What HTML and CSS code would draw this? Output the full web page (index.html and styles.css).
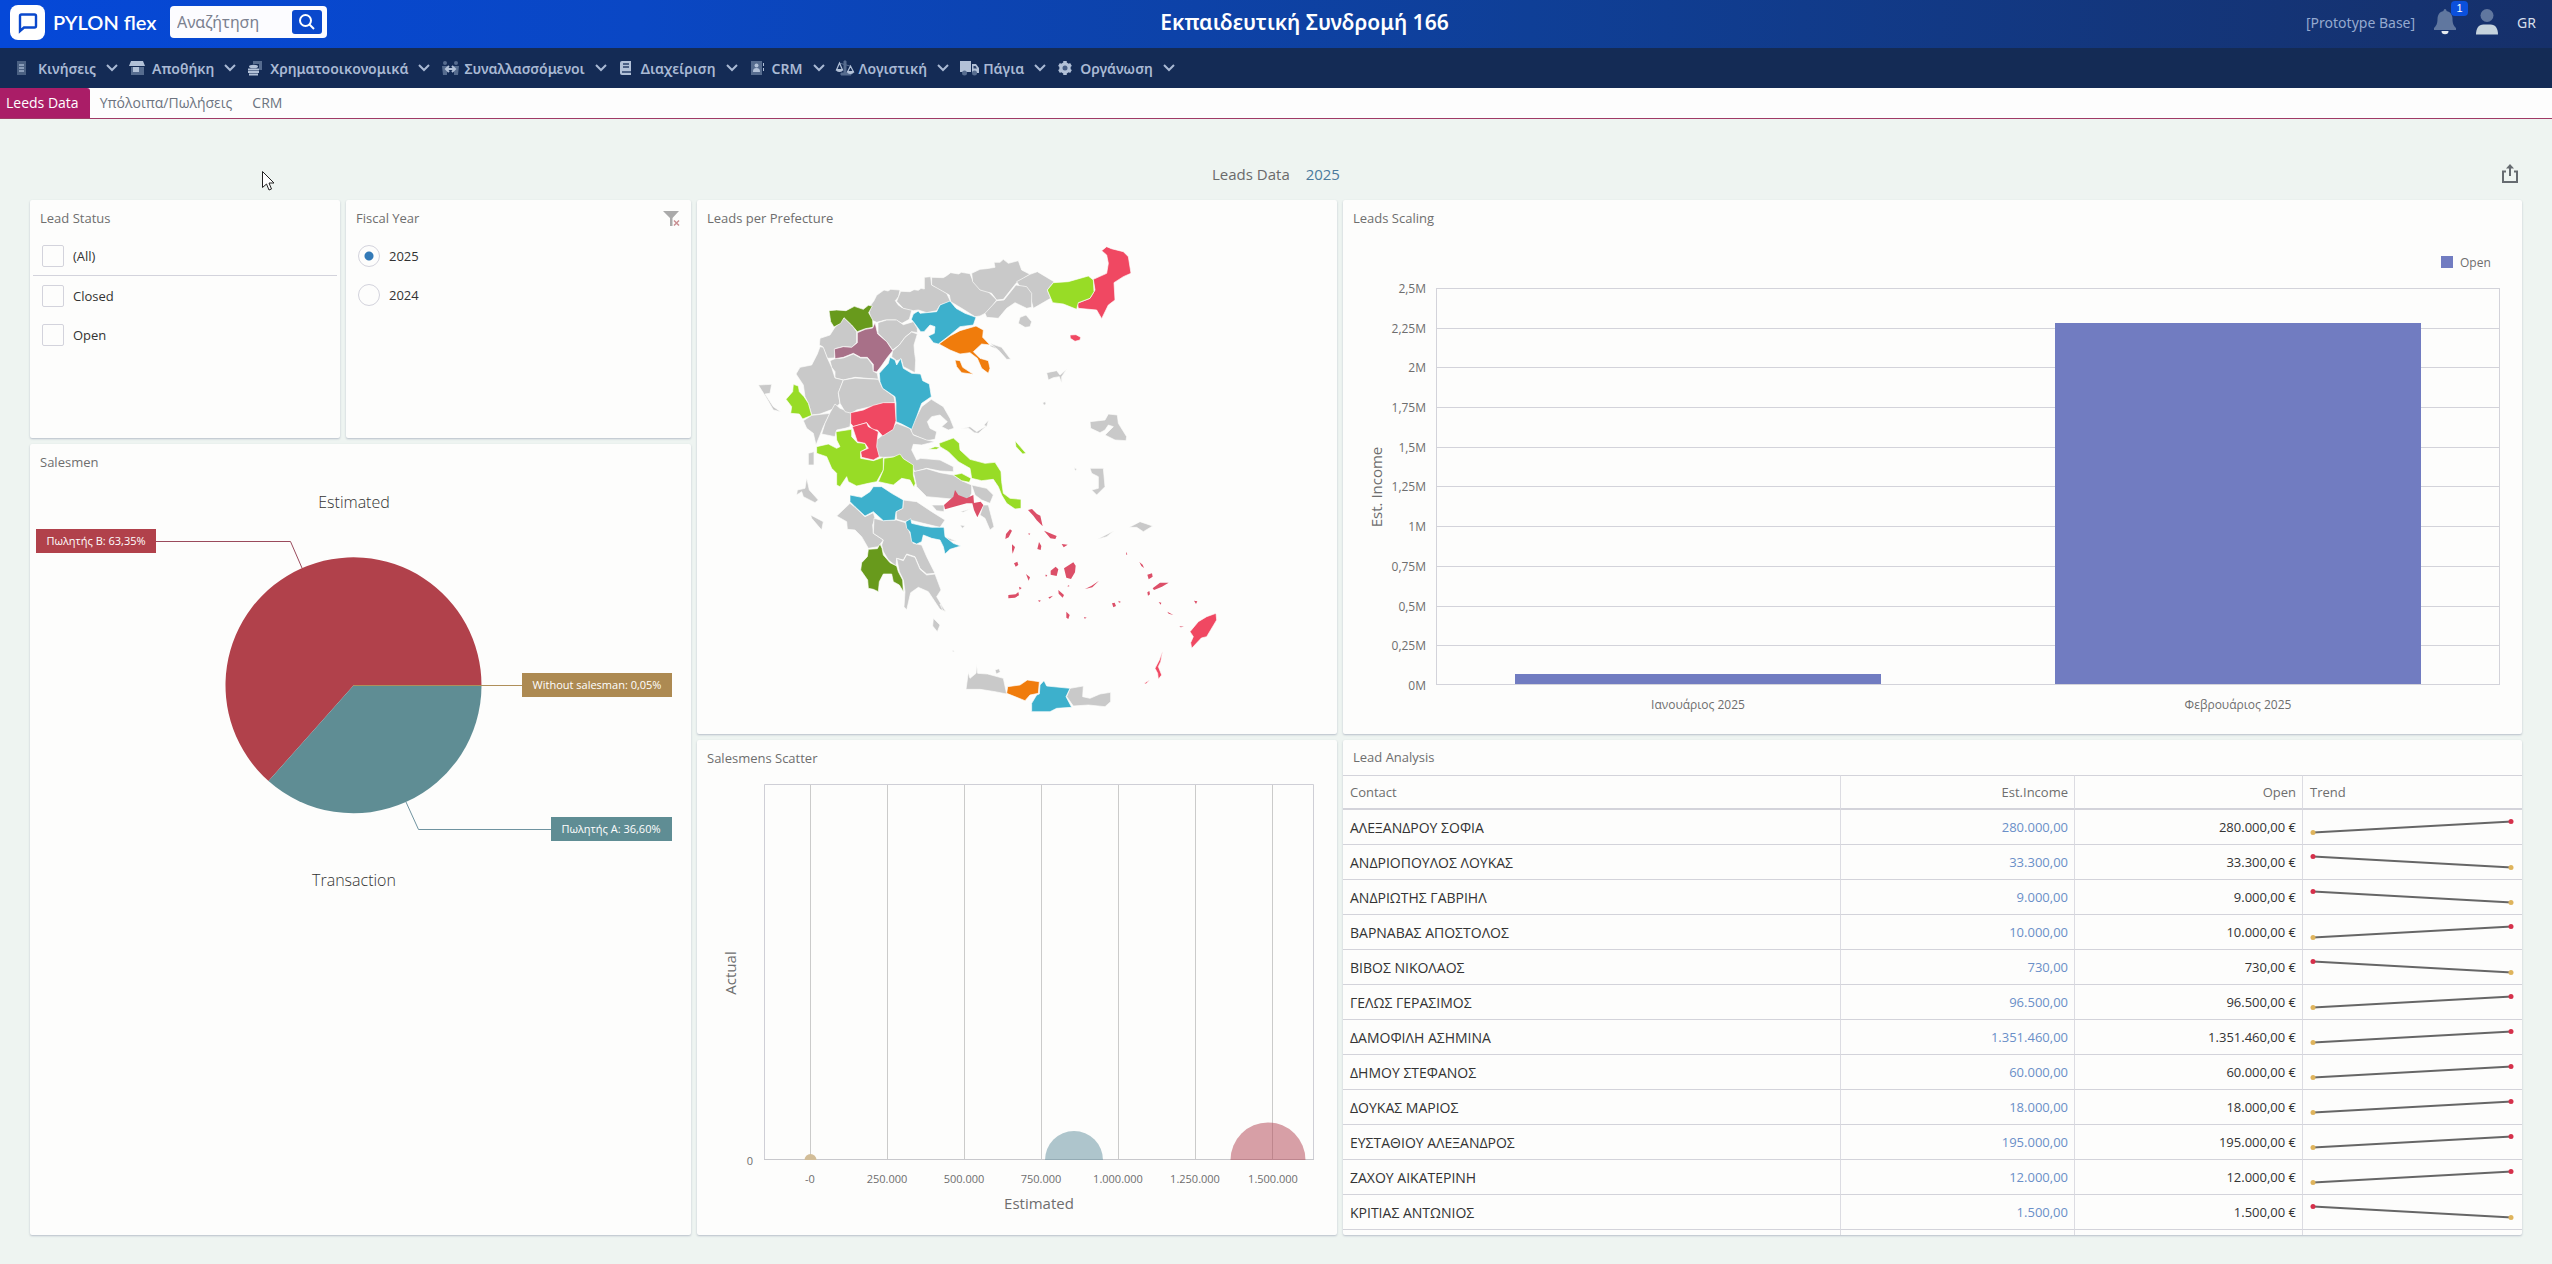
FILE: index.html
```html
<!DOCTYPE html>
<html lang="el">
<head>
  <meta charset="utf-8">
  <title>PYLON flex</title>
  <link rel="stylesheet" href="styles.css">
</head>
<body>
  <svg class="defs" width="0" height="0" aria-hidden="true">
    <symbol id="chev" viewBox="0 0 12 8"><path d="M1 1l5 5 5-5" fill="none" stroke="currentColor" stroke-width="2"/></symbol>
    <symbol id="up" viewBox="0 0 204 16">
      <path d="M3 13.500L202 2.500" stroke="#666" stroke-width="2"/>
      <circle cx="3" cy="13.500" r="2.500" fill="#dfb45c"/><circle cx="201" cy="2.500" r="2.500" fill="#d6304a"/>
    </symbol>
    <symbol id="down" viewBox="0 0 204 16">
      <path d="M3 2.500L202 13.500" stroke="#666" stroke-width="2"/>
      <circle cx="3" cy="2.500" r="2.500" fill="#d6304a"/><circle cx="201" cy="13.500" r="2.500" fill="#dfb45c"/>
    </symbol>
  </svg>

  <header class="topbar">
    <div class="brand">
      <svg width="35" height="35" viewBox="0 0 35 35">
        <rect width="35" height="35" rx="8" fill="#fff"/>
        <path d="M10 26V11a1.500 1.500 0 0 1 1.500-1.500h13A1.500 1.500 0 0 1 26 11v10a1.500 1.500 0 0 1-1.500 1.500H14z" fill="none" stroke="#0a48cc" stroke-width="2.400"/>
      </svg>
      <span class="brand-name">PYLON flex</span>
    </div>
    <form class="search">
      <input type="text" placeholder="Αναζήτηση" aria-label="Αναζήτηση">
      <button type="button" aria-label="Αναζήτηση">
        <svg width="18" height="18" viewBox="0 0 18 18"><circle cx="7.500" cy="7.500" r="5.500" fill="none" stroke="#fff" stroke-width="2"/><path d="M11.500 11.500L16 16" stroke="#fff" stroke-width="2"/></svg>
      </button>
    </form>
    <h1 class="company">Εκπαιδευτική Συνδρομή 166</h1>
    <div class="user-tools">
      <span class="base">[Prototype Base]</span>
      <button class="icon-btn bell" type="button" aria-label="1">
        <svg width="24" height="26" viewBox="0 0 24 26"><path d="M12 0c1 0 1.500 1 1.500 2 4 .8 6 4 6 8 0 5 1.500 7 3.500 9v2H1v-2c2-2 3.500-4 3.500-9 0-4 2-7.200 6-8 0-1 .5-2 1.500-2z" fill="#60779f"/><path d="M8.500 22h7a3.500 3.200 0 0 1-7 0z" fill="#e4e9ee"/></svg>
        <span class="badge">1</span>
      </button>
      <button class="icon-btn" type="button" aria-label="User">
        <svg width="24" height="26" viewBox="0 0 24 26"><circle cx="12" cy="6.500" r="6.500" fill="#60779f"/><path d="M1 25.500c0-6 2.500-10 7.500-10h7c5 0 7.500 4 7.500 10z" fill="#c5d3dd"/></svg>
      </button>
      <span class="lang">GR</span>
    </div>
  </header>

  <nav class="menu">
    <a href="#"><svg class="ico" viewBox="0 0 20 16"><path d="M3 1h9v14H3z" fill="#4a6082"/><path d="M5 5h5M5 8h5M5 11h5" stroke="#9fb0cc" stroke-width="1.500"/></svg>Κινήσεις<svg class="chev"><use href="#chev"/></svg></a>
    <a href="#"><svg class="ico" viewBox="0 0 20 16"><path d="M3 1h12l2 5H1z" fill="#b2c1d8"/><path d="M3 7h13v8H3z" fill="#566c8f"/><path d="M5 7h6v5H5z" fill="#b2c1d8"/></svg>Αποθήκη<svg class="chev"><use href="#chev"/></svg></a>
    <a href="#"><svg class="ico" viewBox="0 0 20 16"><path d="M7 1h9v9h-3V4H7z" fill="#566c8f"/><ellipse cx="7.500" cy="6.500" rx="4.500" ry="1.800" fill="#b2c1d8"/><path d="M2 9.500h11M2 12h11M3 14.500h9" stroke="#b2c1d8" stroke-width="1.800"/></svg>Χρηματοοικονομικά<svg class="chev"><use href="#chev"/></svg></a>
    <a href="#"><svg class="ico" viewBox="0 0 20 16"><circle cx="5" cy="3" r="2" fill="#566c8f"/><circle cx="16" cy="3" r="2" fill="#566c8f"/><path d="M2 6h5v9H3zM14 6h5l-1 9h-4z" fill="#566c8f"/><path d="M6 9h9M9 6L6 9l3 3M12 6l3 3-3 3" fill="none" stroke="#b2c1d8" stroke-width="2"/></svg>Συναλλασσόμενοι<svg class="chev"><use href="#chev"/></svg></a>
    <a href="#"><svg class="ico" viewBox="0 0 20 16"><path d="M5 1h9v14H5a2 2 0 0 1-2-2V3a2 2 0 0 1 2-2z" fill="#b2c1d8"/><path d="M6 4h6M6 7h6M5 12h9" stroke="#2a4069" stroke-width="1.500"/></svg>Διαχείριση<svg class="chev"><use href="#chev"/></svg></a>
    <a href="#"><svg class="ico" viewBox="0 0 20 16"><path d="M3 1h11v14H3z" fill="#566c8f"/><circle cx="8.500" cy="5.500" r="2" fill="#b2c1d8"/><path d="M5 12c0-3 1-4 3.500-4s3.500 1 3.500 4zM15 3h1v3h-1zM15 8h1v3h-1z" fill="#b2c1d8"/></svg>CRM<svg class="chev"><use href="#chev"/></svg></a>
    <a href="#"><svg class="ico" viewBox="0 0 20 16"><path d="M9 1h2v12h5v2H6v-2h3zM4 3l11 3" fill="#566c8f" stroke="#566c8f"/><path d="M4.500 3L1.500 10h6zM15.500 6l-3 6h6z" fill="none" stroke="#b2c1d8" stroke-width="1.200"/><path d="M1 9h7a3.500 3 0 0 1-7 0zM12 11h7a3.500 3 0 0 1-7 0z" fill="#b2c1d8"/></svg>Λογιστική<svg class="chev"><use href="#chev"/></svg></a>
    <a href="#"><svg class="ico" viewBox="0 0 20 16"><path d="M1 1h11v11H1zM13 4h4l3 4v5h-7z" fill="#b2c1d8"/><path d="M14.500 6h2l1.500 2.500h-3.500z" fill="#2a4069"/><circle cx="5.500" cy="13" r="2.500" fill="#566c8f"/><circle cx="15.500" cy="13" r="2.500" fill="#566c8f"/></svg>Πάγια<svg class="chev"><use href="#chev"/></svg></a>
    <a href="#"><svg class="ico" viewBox="0 0 20 16"><circle cx="9" cy="8" r="4" fill="none" stroke="#b2c1d8" stroke-width="3.500"/><path d="M9 1v14M3 4.500l12 7M3 11.500l12-7" stroke="#b2c1d8" stroke-width="3.500"/><circle cx="9" cy="8" r="2.500" fill="#465d85"/></svg>Οργάνωση<svg class="chev"><use href="#chev"/></svg></a>
  </nav>

  <div class="tabs">
    <a class="tab active" href="#">Leeds Data</a>
    <a class="tab" href="#">Υπόλοιπα/Πωλήσεις</a>
    <a class="tab" href="#">CRM</a>
  </div>

  <main class="page">
    <div class="dash-title">
      <h2>Leads Data <span>2025</span></h2>
      <button class="icon-btn share" type="button" aria-label="Export">
        <svg width="18" height="20" viewBox="0 0 18 20"><path d="M5 7.500H2v10.500h14V7.500h-3M9 12V3" fill="none" stroke="#666b70" stroke-width="2"/><path d="M9 0l4 4.500H5z" fill="#666b70"/></svg>
      </button>
    </div>

    <div class="dashboard">
      <div class="col col-left">
        <div class="filters">
          <section class="panel status">
            <h3>Lead Status</h3>
            <label class="opt all"><input type="checkbox">(All)</label>
            <label class="opt"><input type="checkbox">Closed</label>
            <label class="opt"><input type="checkbox">Open</label>
          </section>
          <section class="panel year">
            <div class="panel-head">
              <h3>Fiscal Year</h3>
              <button class="icon-btn" type="button" aria-label="Clear filter">
                <svg width="17" height="17" viewBox="0 0 17 17"><path d="M0 1h16l-6.500 7v8H7V8z" fill="#aaa"/><path d="M11 10.500l5 5M16 10.500l-5 5" stroke="#c98f92" stroke-width="1.500"/></svg>
              </button>
            </div>
            <label class="opt"><input type="radio" name="year" checked>2025</label>
            <label class="opt"><input type="radio" name="year">2024</label>
          </section>
        </div>
        <section class="panel salesmen">
          <h3>Salesmen</h3>
          <svg class="chart" viewBox="30 480 661 755">
            <text class="pie-title" x="354" y="508">Estimated</text>
            <path d="M353.500 685.500H481.500A128 128 0 1 0 268.500 781z" fill="#b1414b"/>
            <path d="M353.500 685.500L268.500 781A128 128 0 0 0 481.500 685.500z" fill="#5f8d94"/>
            <path d="M353.500 685.500H522" stroke="#af8f5a"/>
            <path d="M156 541.500H290.500L302 568" fill="none" stroke="#9a4a5c"/>
            <path d="M406 802L418.500 829.500H551" fill="none" stroke="#6f93a0"/>
            <rect x="36" y="529" width="120" height="24" fill="#b1414b"/>
            <rect x="522" y="673" width="150" height="24" fill="#ad8a52"/>
            <rect x="551" y="817" width="121" height="24" fill="#5f8d94"/>
            <text class="pie-label" x="96" y="545">Πωλητής Β: 63,35%</text>
            <text class="pie-label" x="597" y="689">Without salesman: 0,05%</text>
            <text class="pie-label" x="611" y="833">Πωλητής Α: 36,60%</text>
            <text class="pie-title" x="354" y="886">Transaction</text>
          </svg>
        </section>
      </div>

      <div class="col col-mid">
        <section class="panel prefectures">
          <h3>Leads per Prefecture</h3>
          <svg class="chart map" viewBox="-129 18 1920 1494">
            <!-- north and central mainland -->
            <g class="land">
              <path d="M388 248l4-22 10-14 8-16 22-16 12 3 8-5 28 2-4 20-10 12 8 12 12 9 30 5-8 30-22 12-20-10h-30l-26 7-16-7z"/>
              <path d="M414 278l26-8h30l20 14 30-9 12 20v13l-17-3-20 17-17 23-20 15-18-25-26-25z"/>
              <path d="M458 362l20-17 17-23 20-16 17 6-10 33 2 25 3 20-2 38-35-18-6-22-14 4-15-12z"/>
              <path d="M482 184l28 1 12-6 13 2 8-6 10 2v-35l19-2 3 25 23 10 22 15 12 25-32 10-10 17-30 6-25-8-15 2-30-7-20-21z"/>
              <path d="M575 142l35 1 10-6 12-9 24 4 8-5 26 4 10 24 45 30 25 25-25 35-25 13-15 2-35-22-38-23-4-20-53-30z"/>
              <path d="M240 325l30-10 14-22 28-29 23 21 15 20v33l-15 14-25-2-25 6-2 28-21 1-14-35-10-5z"/>
              <path d="M270 392l15-6 25-2 30-12 22 12h20l16 21 2 19 12 6 3 18-70-6-35 8-25-6v-19l-10-13z"/>
              <path d="M240 350l10 2 12 32 13 28 10 32 25 6-15 40 5 30-15 15-45 17-25 3-10-35-10-20-5-35-22-33 12-20 35-7 17-33z"/>
              <path d="M190 572l25-16 55-6-20 40-12 30-10 25-8-35-20-15z"/>
              <path d="M285 522l15 13 35 13-5 42-15 5-25 5-5 20-40-8 10-32 15-32z"/>
              <path d="M295 488l15-38 35-6 70 4 13 27 34 25 3 18-35 2-30 8-50 12-15 10-20-5-15-25z"/>
              <path d="M574 508l36 22 20 35 12 30-17 5-20-10 17-15-22-20-25 5-13 15 8 20 20 10-5 23-25 4-45-20-3-20 18-32 15-30z"/>
              <path d="M410 630l30-25 30-25 40 15 10 20 40 15 25 5-40 10-25-2-5 17 15 30 12-5 58 5 40 20v15l-40-2-40-8-35 10-15-25-30-20-50 2-15-2-8-30z"/>
              <path d="M520 725l40-9 40 12 40 7 25 17 30 13v25l-10 20-30-6-20 3-75-7-30-30z"/>
              <path d="M55 465l40-2-5 27-15 2 25 38 22 15-22-5-20-35zM750 345l35 8-10 6-25-10zM660 597l30-7 20 15 25-15 8-5-28 25-12-2-18-14z"/>
            </g>
            <g class="dgreen"><path d="M267 242l23-2 28 2 25-13 27 9 15-12 12 2-11 20 12 22 1 22-23 4-24 9-17-20-23-22-10 17-20 11-10-16z"/></g>
            <g class="purple"><path d="M405 278l8 34 27 23 18 27-18 23-16 23-14 18-10-2v-21l-18-21h-20l-22-12-30 12-25 4-2-29 27-7 25 2 17-14v-30l24-10 22-4z"/></g>
            <g class="blue">
              <path d="M520 252l15-9 5 7 50-5 10-20 30-12 18 22 27 15 33 12-8 23-40 5-30 25-35 27-15-4-15-20 18-8 2-20-15-5-18 20h-10l-22-30-6-7z"/>
              <path d="M418 430l27-30 5-18 15 8 5 15 12-20 8 30 25 15 27 2 6 20 20 10 6 38-29 20-15 40-15 38-30-16-17-7V520l-3-20-37-25-8-20z"/>
            </g>
            <g class="orange"><path d="M597 342l33-24 30-16 48-14 22 12-2 22 22 23-25-3-25 23 20 20 25 7 5 23-5 15-20-15-13-30-22-17-30 4-30-12zM645 390l15 2 8 20 32 21-35-5-15-18z"/></g>
            <g class="green">
              <path d="M160 463l15 5 3 17 14 15 13 20 10 36-27 11-10-15-26-2 3-20-17-22 20-23z"/>
              <path d="M288 605l47-7v22l17 18 23 2 5 15-18 10v20l38 7 30-10v38l-20 35-25 5-35 8-25-13-5-15-20 30-10-5v-35l-15-15-15-35-30-10v-20l35-8 25 13 10-5-10-20z"/>
              <path d="M432 685l28-4 20-9 10 14 30 19v30l6 25-4 12-12-22-25-5-25 20-45-10 15-35z"/>
              <path d="M597 640l43-16 18 16 2 20 30 28 45 12 30-3 18 28 2 30 5 35 20 15 33 3v27l-18 2-25-17-15-25-10-25-15-22-35 4-30-7-5-30-35-20-30-30-25-15zM640 735l25-5 28 15-5 12-23-5zM565 658l20-8 15 2-10 6z"/>
            </g>
            <g class="pink">
              <path d="M332 548l38-8 30-14 30-8h35l3 54-8 26-32 20-16-18h-14l-18-22-40 12-8-10z"/>
              <path d="M337 590l43-12 5 12 30 15-3 23-2 22 8 30-18 10-35-8-3-17 23-10-10-15-23-5z"/>
            </g>

            <!-- Thrace and the north Aegean -->
            <g transform="translate(720 0)">
              <g class="land">
                <path d="M-25 130l25-12 20-2 25-4-3-15h18l10-9 15 12 30-8 10 28 25 13-42 27-38 48-20 2-15-20-35-10-22-25z"/>
                <path d="M110 155l40-22 22-8 50 30-20 25 10 25-52 30-12-45-28-20z"/>
                <path d="M15 250l35-38 22-2 36-45 32 5 15 20v42l-15 3-35-17-25 17-25 30-35-3z"/>
                <path d="M120 262l18-7 17 20-5 15-15 2-20-12zM30 340l35 12 27 36h-12l-25-28zM200 428l30-6 10 13 20-17-15 22v20l-7-20-18 3-15 7zM330 575l45-5 10-18 27 3 3 25 25 40-2 12-33-2-30-15 25-25-15-5-10 15-15 8-28-13zM188 518l8-3 2 7-6 4zM12 585l14-15-6 20zM282 712l8 5-3 6z"/>
              </g>
              <path class="pink" d="M365 62l15-12 14 6 36 9 15 15 8 50-23 10-28 18 3 52-20 15-20 41-15-26-55-5-3-15 38-15 15-25-5-32 40-18 5-30-5-25zM270 315l18-1 14 8-2 8-15 4-14-9z"/>
              <path class="green" d="M202 180l18-22 45-3 60-17 15 12 2 35-12 20-35 13-5 20-40-16-32-4zM105 632l33 38-10 2-20-22z"/>
            </g>

            <!-- Peloponnese and the Ionian islands -->
            <g transform="translate(0 630)">
              <g class="land">
                <path d="M290 228l40-38 15 12 30 28 25-12 5 17-7 20 2 25 30 20-15 20-30 5-20-35-20-20-23-2-2-23z"/>
                <path d="M490 180l40 5 45 30 40 25-15 22-50-12-40-10-15 5-25-7-2-23 20-10zM575 195h37v20l-22-3z"/>
                <path d="M402 235l28 7 40-2 27 8 13 32 10 30 25 5 15 35 25 50-25 2-20-17-15-35-25-8-10 18-20-5-2 23-23-18-15-25-5-20 5-15-30-20z"/>
                <path d="M470 355l20 7 10-18 25 8 15 36 20 17 25-3 18 48-13 20 27 45-17-7-35-53-30-13-23 16-12 52-8-10 3-45-5-35-12-25z"/>
                <path d="M695 135l45 10 20 20-10 25-25-10-20-15zM730 195h15l17 65-12 10-15-35-15-10z"/>
                <path d="M580 535l20 20-8 20-14-17zM205 40l17-5v40h-17zM200 113l8 37 27 30-10 8-35-18-5-15-15 10 2-15 23-5zM212 225l38 20-5 25-30-35zM660 215l30-8-20 10zM620 292l30 12-20-2zM660 255l15 2-8 8zM637 631l6 2-4 4z"/>
              </g>
              <path class="blue" d="M330 165l35 7 25-17 10-15h25l30 20 35 20-2 25-20 10-3 25-35 2-30-27-25 13-30-28-15-15z"/>
              <path class="blue" d="M497 245l15-9 3 14 35 8 25 4h37l3 28 25 20 22 8-32 10-15 14-5-22-10-20-25-5-25-10-5 20-15 7-15-7-5-30-10-10z"/>
              <path class="dgreen" d="M385 328l27-2 8-14 6 13 4 20 20 23 20 10 5 17 13 25 2 35-12-20-18-10-5-23h-25l-12 23-3 30-15-7-15-3-2-25-21-30 3-22 17-18z"/>
              <path class="rose" d="M612 195l28-25 5-20 10 15 25 10 20-10 2 25h-22l-30 8-35 10zM697 190l25-5 8 10-18 37-10-22z"/>
            </g>

            <!-- Cyclades, Dodecanese, Crete -->
            <g transform="translate(600 630)">
              <path class="land" d="M85 697l5 18 18-15 2-27 3 27 30 2 47 13 10 47-35-7-45-7-42 0zM165 690l12-4 4 10-12 6zM390 745l40-7-2 32 22 5 30-13 32-5v28l-17 15-50-5-45 3-20-28zM450 85h40l5 55-25 25-15-15 20-5v-35l-20-10zM568 262l32-17 38 13-28 17-20-13zM472 298l50-26-22 18zM0 492l18 22-10-4zM402 84l8 4-4 5z"/>
              <path class="orange" d="M203 740l37-5 22-15 36 5-3 35-25 5-15 17-55-22z"/>
              <path class="blue" d="M300 735l12-13 8 16 70 7-12 25 17 32-45 3-20 10h-55v-25l15-25 8-3z"/>
              <path class="pink" d="M828 520l2 20-30 50-16 4-29 31-3-17 8-18-10-15 25-30 25-15zM668 632l-6 33-7 15 10 25-10 13-2-18-8-15 13-25zM612 730l18-10-12 12z"/>
              <path class="rose" d="M264 210l12-3 15 15 10 5 7 32-18-18-10-14zM312 272l38 16-4 9-15-2zM198 282l12-14 6 4-10 20-10 5zM265 280l6 1-4 4zM297 306l7 12-2 12-10-3zM365 312l18 2-12 8zM216 313l9 8-7 20-2-12zM222 370l10-5 3 10-8 5zM332 392l15-12 8 8-5 20-18-4zM372 385l28-18 7 10-2 20-12 20-14-4zM258 402l12 10-4 10zM316 404l6 1-4 6zM205 465l22-2 8-7 2 10-12 7-20 2zM237 440l8 4-6 5zM355 450l17 15-4 8-12-12zM325 472l14-5-10 9zM295 480l8 2-6 4zM435 447l20-10 22-15-20 20zM379 515l10 10-4 12-6-4zM432 531l8 2-6 3zM384 436l5 2-6 2zM516 490l8-2 4 10-8 4zM535 482l8 4-6 2zM598 366l10 8 4 10-8-6zM622 404l14-4 2 10-12 8zM638 445l22-17 26 0-20 12-24 10zM622 457l6-4 2 10-6 4zM656 486l8 2-2 6zM682 515l18 10-14-4zM762 482l10 2-4 8zM718 559l14 1-10 2zM558 335l4 8-3 2z"/>
            </g>
          </svg>
        </section>
        <section class="panel scatter">
          <h3>Salesmens Scatter</h3>
          <svg class="chart" viewBox="697 776 640 459">
            <path d="M764.500 1160V784.500H1313.500V1160" fill="none" stroke="#cfcfd6"/>
            <path d="M810.500 785v375M887.500 785v375M964.500 785v375M1041.500 785v375M1118.500 785v375M1195.500 785v375M1272.500 785v375" stroke="#cbcbca"/>
            <path d="M764 1159.500H1314" stroke="#c8c8cc"/>
            <path d="M804.500 1160a6 6 0 0 1 12 0z" fill="#d2bd98"/>
            <path d="M1045 1160a29 29 0 0 1 58 0z" fill="#5f8d9b" fill-opacity=".5"/>
            <path d="M1230.500 1160a37.500 37.500 0 0 1 75 0z" fill="#b1414f" fill-opacity=".5"/>
            <text class="tick mid" x="750" y="1165">0</text>
            <g class="tick mid">
              <text x="810" y="1183">-0</text>
              <text x="887" y="1183">250.000</text>
              <text x="964" y="1183">500.000</text>
              <text x="1041" y="1183">750.000</text>
              <text x="1118" y="1183">1.000.000</text>
              <text x="1195" y="1183">1.250.000</text>
              <text x="1273" y="1183">1.500.000</text>
            </g>
            <text class="axis" x="1039" y="1209">Estimated</text>
            <text class="axis" transform="translate(736 973) rotate(-90)">Actual</text>
          </svg>
        </section>
      </div>

      <div class="col col-right">
        <section class="panel scaling">
          <h3>Leads Scaling</h3>
          <svg class="chart" viewBox="1343 236 1179 498">
            <path d="M1436 288.500H2500M1436 328.500H2500M1436 367.500H2500M1436 407.500H2500M1436 447.500H2500M1436 486.500H2500M1436 526.500H2500M1436 566.500H2500M1436 606.500H2500M1436 645.500H2500M1436 684.500H2500" stroke="#d3d3da"/>
            <path d="M1436.500 288V685M2499.500 288V685" stroke="#d3d3da"/>
            <path d="M1515 674h366v10h-366zM2055 323h366v361h-366z" fill="#717cc1"/>
            <rect x="2441" y="256" width="12" height="12" fill="#717cc1"/>
            <text class="tick" x="2460" y="267">Open</text>
            <g class="tick end">
              <text x="1426" y="293">2,5M</text>
              <text x="1426" y="333">2,25M</text>
              <text x="1426" y="372">2M</text>
              <text x="1426" y="412">1,75M</text>
              <text x="1426" y="452">1,5M</text>
              <text x="1426" y="491">1,25M</text>
              <text x="1426" y="531">1M</text>
              <text x="1426" y="571">0,75M</text>
              <text x="1426" y="611">0,5M</text>
              <text x="1426" y="650">0,25M</text>
              <text x="1426" y="690">0M</text>
            </g>
            <text class="tick mid" x="1698" y="709">Ιανουάριος 2025</text>
            <text class="tick mid" x="2238" y="709">Φεβρουάριος 2025</text>
            <text class="axis" transform="translate(1382 487) rotate(-90)">Est. Income</text>
          </svg>
        </section>
        <section class="panel analysis">
          <h3>Lead Analysis</h3>
          <table>
            <colgroup><col><col class="c-est"><col class="c-open"><col class="c-trend"></colgroup>
            <thead>
              <tr><th>Contact</th><th class="num">Est.Income</th><th class="num">Open</th><th>Trend</th></tr>
            </thead>
            <tbody>
              <tr><td class="name">ΑΛΕΞΑΝΔΡΟΥ ΣΟΦΙΑ</td><td class="num est">280.000,00</td><td class="num">280.000,00 €</td><td><svg class="spark"><use href="#up"/></svg></td></tr>
              <tr><td class="name">ΑΝΔΡΙΟΠΟΥΛΟΣ ΛΟΥΚΑΣ</td><td class="num est">33.300,00</td><td class="num">33.300,00 €</td><td><svg class="spark"><use href="#down"/></svg></td></tr>
              <tr><td class="name">ΑΝΔΡΙΩΤΗΣ ΓΑΒΡΙΗΛ</td><td class="num est">9.000,00</td><td class="num">9.000,00 €</td><td><svg class="spark"><use href="#down"/></svg></td></tr>
              <tr><td class="name">ΒΑΡΝΑΒΑΣ ΑΠΟΣΤΟΛΟΣ</td><td class="num est">10.000,00</td><td class="num">10.000,00 €</td><td><svg class="spark"><use href="#up"/></svg></td></tr>
              <tr><td class="name">ΒΙΒΟΣ ΝΙΚΟΛΑΟΣ</td><td class="num est">730,00</td><td class="num">730,00 €</td><td><svg class="spark"><use href="#down"/></svg></td></tr>
              <tr><td class="name">ΓΕΛΩΣ ΓΕΡΑΣΙΜΟΣ</td><td class="num est">96.500,00</td><td class="num">96.500,00 €</td><td><svg class="spark"><use href="#up"/></svg></td></tr>
              <tr><td class="name">ΔΑΜΟΦΙΛΗ ΑΣΗΜΙΝΑ</td><td class="num est">1.351.460,00</td><td class="num">1.351.460,00 €</td><td><svg class="spark"><use href="#up"/></svg></td></tr>
              <tr><td class="name">ΔΗΜΟΥ ΣΤΕΦΑΝΟΣ</td><td class="num est">60.000,00</td><td class="num">60.000,00 €</td><td><svg class="spark"><use href="#up"/></svg></td></tr>
              <tr><td class="name">ΔΟΥΚΑΣ ΜΑΡΙΟΣ</td><td class="num est">18.000,00</td><td class="num">18.000,00 €</td><td><svg class="spark"><use href="#up"/></svg></td></tr>
              <tr><td class="name">ΕΥΣΤΑΘΙΟΥ ΑΛΕΞΑΝΔΡΟΣ</td><td class="num est">195.000,00</td><td class="num">195.000,00 €</td><td><svg class="spark"><use href="#up"/></svg></td></tr>
              <tr><td class="name">ΖΑΧΟΥ ΑΙΚΑΤΕΡΙΝΗ</td><td class="num est">12.000,00</td><td class="num">12.000,00 €</td><td><svg class="spark"><use href="#up"/></svg></td></tr>
              <tr><td class="name">ΚΡΙΤΙΑΣ ΑΝΤΩΝΙΟΣ</td><td class="num est">1.500,00</td><td class="num">1.500,00 €</td><td><svg class="spark"><use href="#down"/></svg></td></tr>
              <tr><td></td><td></td><td></td><td></td></tr>
            </tbody>
          </table>
        </section>
      </div>
    </div>
  </main>

  <svg class="cursor" width="13" height="20" viewBox="0 0 13 20"><path d="M.5.500v16l4-3.500 2.500 6 2.500-1-2.500-6h5z" fill="#fff" stroke="#222"/></svg>
</body>
</html>
```

FILE: styles.css
```css
* {
  box-sizing: border-box;
}

body {
  margin: 0;
  height: 100vh;
  display: flex;
  flex-direction: column;
  background-color: #eef4f1;
  color: #333;
  font-family: "Open Sans", "Noto Sans", sans-serif;
  font-size: 13px;
}

h1, h2, h3 {
  margin: 0;
  font-weight: 400;
}

a {
  text-decoration: none;
}

.defs {
  position: absolute;
}

/* top bar */
.topbar {
  height: 48px;
  display: flex;
  align-items: center;
  padding: 0 16px 4px 10px;
  background: linear-gradient(90deg, #0548d8 0%, #0a47c4 25%, #0f3f97 60%, #16306a 100%);
  font-family: "Noto Sans", sans-serif;
  position: relative;
}

.brand {
  display: flex;
  align-items: center;
  gap: 8px;
  width: 160px;
}

.brand-name {
  color: #fff;
  font-family: Lato, sans-serif;
  font-size: 20px;
  font-weight: 600;
}

.search {
  display: flex;
  align-items: center;
  width: 157px;
  height: 32px;
  padding: 0 5px 0 7px;
  background-color: #fcfcff;
  border-radius: 4px;
}

.search input {
  flex: 1;
  min-width: 0;
  padding: 0;
  border: none;
  background: none;
  font-family: inherit;
  font-size: 16px;
  outline: none;
}

.search input::placeholder {
  color: #7b8190;
}

.search button {
  display: flex;
  align-items: center;
  justify-content: center;
  width: 30px;
  height: 24px;
  padding: 0;
  border: none;
  border-radius: 3px;
  background-color: #0a48cc;
}

.company {
  flex: 1;
  padding-right: 24px;
  color: #fff;
  font-size: 21px;
  font-weight: 600;
  text-align: center;
}

.user-tools {
  display: flex;
  align-items: center;
  gap: 18px;
  color: #94a9cf;
  font-size: 14px;
}

.icon-btn {
  display: flex;
  padding: 0;
  border: none;
  background: none;
}

.bell {
  position: relative;
}

.badge {
  position: absolute;
  top: -8px;
  right: -11px;
  width: 17px;
  height: 15px;
  border-radius: 4px;
  background-color: #0b50dc;
  color: #fff;
  font-size: 11px;
  line-height: 15px;
  text-align: center;
}

.lang {
  color: #d5deea;
}

/* menu */
.menu {
  height: 40px;
  display: flex;
  align-items: center;
  gap: 10px;
  padding-left: 14px;
  background-color: #142b55;
  font-family: "Noto Sans", sans-serif;
  font-size: 14px;
  font-weight: 600;
}

.menu a {
  display: flex;
  align-items: center;
  color: #a9b9d4;
}

.ico {
  width: 20px;
  height: 16px;
  margin-right: 4px;
}

.chev {
  width: 12px;
  height: 8px;
  margin-left: 10px;
}

/* tabs */
.tabs {
  display: flex;
  background-color: #fdfdfd;
  border-bottom: 1px solid #a03a66;
}

.tab {
  padding: 0 10px;
  color: #6c7380;
  font-size: 14px;
  line-height: 30px;
}

.tab.active {
  padding: 0 11px 0 6px;
  border-radius: 0 3px 0 0;
  background-color: #aa1d67;
  color: #fff;
}

/* dashboard */
.page {
  flex: 1;
  min-height: 0;
  display: flex;
  flex-direction: column;
  padding: 0 30px 29px;
}

.dash-title {
  height: 81px;
  padding-top: 29px;
  display: flex;
  align-items: center;
}

.dash-title h2 {
  flex: 1;
  padding-left: 21px;
  color: #6a6a6a;
  font-size: 15px;
  text-align: center;
}

.dash-title span {
  margin-left: 12px;
  color: #4a7a9c;
}

.share {
  margin-right: 3px;
}

.dashboard {
  flex: 1;
  min-height: 0;
  display: grid;
  grid-template-columns: 661fr 640fr 1179fr;
  grid-template-rows: minmax(0, 1fr);
  gap: 6px;
}

.col {
  display: grid;
  gap: 6px;
  min-width: 0;
}

.col-left {
  grid-template-rows: minmax(0, 238fr) minmax(0, 791fr);
}

.col-mid,
.col-right {
  grid-template-rows: minmax(0, 534fr) minmax(0, 495fr);
}

.filters {
  display: grid;
  grid-template-columns: 310fr 345fr;
  gap: 6px;
}

.panel {
  display: flex;
  flex-direction: column;
  min-height: 0;
  overflow: hidden;
  background-color: #fdfdfc;
  border-radius: 2px;
  box-shadow: 0 1px 2px rgba(60, 70, 110, 0.3);
}

.panel h3 {
  padding-left: 10px;
  color: #6e6e6e;
  font-size: 13px;
  line-height: 36px;
}

.chart {
  flex: 1;
  width: 100%;
  min-height: 0;
}

.panel-head {
  display: flex;
  align-items: center;
  justify-content: space-between;
  padding-right: 11px;
}

.opt {
  display: flex;
  align-items: center;
  gap: 9px;
  height: 39px;
  padding-left: 12px;
}

.opt input {
  appearance: none;
  width: 22px;
  height: 22px;
  margin: 0;
  border: 1px solid #d3d3dc;
  border-radius: 2px;
}

.opt input[type="radio"] {
  border-radius: 50%;
}

.opt input[type="radio"]:checked {
  background: radial-gradient(circle, #337ab7 4px, transparent 5px);
}

.status .all {
  height: 40px;
  margin: 0 3px;
  padding-left: 9px;
  border-bottom: 1px solid #d3d3dc;
}

/* chart text */
.tick {
  fill: #6e6e6e;
  font-size: 11px;
}

.scaling .tick {
  font-size: 12px;
}

.axis {
  fill: #6e6e6e;
  font-size: 15px;
  text-anchor: middle;
}

.mid {
  text-anchor: middle;
}

.end {
  text-anchor: end;
}

.pie-title {
  fill: #333;
  font-size: 16px;
  font-weight: 300;
  text-anchor: middle;
}

.pie-label {
  fill: #fff;
  font-size: 11px;
  text-anchor: middle;
}

/* map */
.map path {
  stroke: #fdfdfc;
  stroke-width: 2px;
  stroke-linejoin: round;
}

.land { fill: #c9c9c9; }
.green { fill: #98dc26; }
.dgreen { fill: #689a1c; }
.blue { fill: #3db0cc; }
.pink { fill: #f04862; }
.rose { fill: #dc4f68; }
.orange { fill: #f07c0c; }
.purple { fill: #a87088; }

.map .rose {
  stroke: none;
}

/* table */
.analysis h3 {
  line-height: 35px;
}

table {
  width: 100%;
  table-layout: fixed;
  border-collapse: separate;
  border-spacing: 0;
}

.c-est { width: 234px; }
.c-open { width: 228px; }
.c-trend { width: 219px; }

th, td {
  height: 35px;
  padding: 0 6px 0 7px;
  border-right: 1px solid #dcdce2;
  border-bottom: 1px solid #d3d3da;
  text-align: left;
}

th {
  border-top: 1px solid #d3d3da;
  border-bottom: 2px solid #d3d3da;
  color: #6e6e6e;
  font-weight: 400;
}

th:last-child,
td:last-child {
  border-right: none;
}

.name {
  font-size: 14px;
}

th.num,
td.num {
  text-align: right;
}

.est {
  color: #6a8fc8;
}

.spark {
  display: block;
  width: 204px;
  height: 16px;
}

.cursor {
  position: absolute;
  left: 262px;
  top: 171px;
}
```
